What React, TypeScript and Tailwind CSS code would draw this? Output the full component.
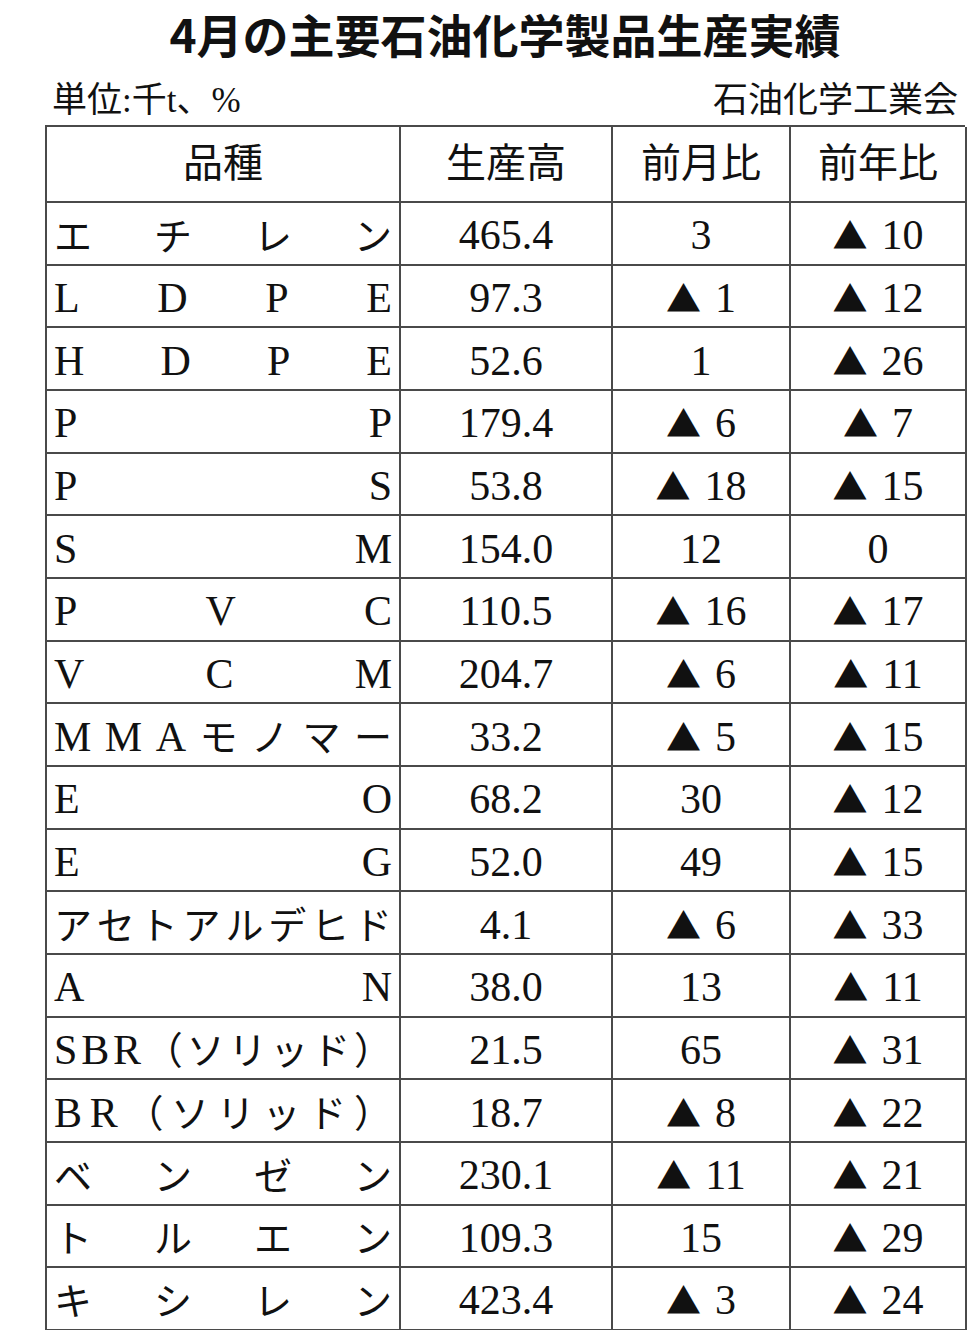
import React from "react";

type Row = { name: string[]; output: string; mom: string; yoy: string };

// 品種は一文字ずつ分けて均等割り付けする
const rows: Row[] = [
  { name: ["エ", "チ", "レ", "ン"], output: "465.4", mom: "3", yoy: "▲10" },
  { name: ["L", "D", "P", "E"], output: "97.3", mom: "▲1", yoy: "▲12" },
  { name: ["H", "D", "P", "E"], output: "52.6", mom: "1", yoy: "▲26" },
  { name: ["P", "P"], output: "179.4", mom: "▲6", yoy: "▲7" },
  { name: ["P", "S"], output: "53.8", mom: "▲18", yoy: "▲15" },
  { name: ["S", "M"], output: "154.0", mom: "12", yoy: "0" },
  { name: ["P", "V", "C"], output: "110.5", mom: "▲16", yoy: "▲17" },
  { name: ["V", "C", "M"], output: "204.7", mom: "▲6", yoy: "▲11" },
  { name: ["M", "M", "A", "モ", "ノ", "マ", "ー"], output: "33.2", mom: "▲5", yoy: "▲15" },
  { name: ["E", "O"], output: "68.2", mom: "30", yoy: "▲12" },
  { name: ["E", "G"], output: "52.0", mom: "49", yoy: "▲15" },
  { name: ["ア", "セ", "ト", "ア", "ル", "デ", "ヒ", "ド"], output: "4.1", mom: "▲6", yoy: "▲33" },
  { name: ["A", "N"], output: "38.0", mom: "13", yoy: "▲11" },
  { name: ["S", "B", "R", "（", "ソ", "リ", "ッ", "ド", "）"], output: "21.5", mom: "65", yoy: "▲31" },
  { name: ["B", "R", "（", "ソ", "リ", "ッ", "ド", "）"], output: "18.7", mom: "▲8", yoy: "▲22" },
  { name: ["ベ", "ン", "ゼ", "ン"], output: "230.1", mom: "▲11", yoy: "▲21" },
  { name: ["ト", "ル", "エ", "ン"], output: "109.3", mom: "15", yoy: "▲29" },
  { name: ["キ", "シ", "レ", "ン"], output: "423.4", mom: "▲3", yoy: "▲24" },
];

const isAscii = (c: string) => /^[A-Za-z0-9]$/.test(c);

function Ratio({ value }: { value: string }) {
  if (!value.startsWith("▲")) return <span>{value}</span>;
  return (
    <span className="flex items-baseline">
      <span className="font-['Noto_Sans_CJK_JP',sans-serif] text-[35px]">▲</span>
      <span className="ml-[14px]">{value.slice(1)}</span>
    </span>
  );
}

const cell = "h-[62.67px] pt-[4px] flex items-center border-r-2 border-b-2 border-[#4a4a4a]";

export default function App() {
  return (
    <main className="w-[970px] h-[1330px] bg-white text-[#111] overflow-hidden">
      <div className="ml-[45px] w-[920px]">
        {/* タイトル */}
        <h1 className="font-['Noto_Sans_CJK_JP',sans-serif] font-bold text-[46px] leading-[66px] text-center">
          4月の主要石油化学製品生産実績
        </h1>

        {/* 単位・出典 */}
        <div className="mt-[14px] h-[42px] px-[7px] flex items-center justify-between font-['Liberation_Serif','Noto_Sans_CJK_JP',serif] text-[35px] leading-[42px]">
          <span>単位:千t、%</span>
          <span>石油化学工業会</span>
        </div>

        {/* 表 */}
        <div className="mt-[3px] grid grid-cols-[354px_212px_178px_176px] border-l-2 border-t-2 border-[#4a4a4a] font-['Liberation_Serif','Noto_Sans_CJK_JP',serif] text-[42px] leading-none">
          {["品種", "生産高", "前月比", "前年比"].map((h) => (
            <div
              key={h}
              className="h-[76px] flex items-center justify-center border-r-2 border-b-2 border-[#4a4a4a] text-[40px]"
            >
              {h}
            </div>
          ))}
          {rows.map((r, i) => (
            <React.Fragment key={i}>
              <div className={`${cell} px-[7px] justify-between`}>
                {r.name.map((c, j) => (
                  <span key={j} className={isAscii(c) ? "" : "text-[38px] pt-[3px]"}>
                    {c}
                  </span>
                ))}
              </div>
              <div className={`${cell} justify-center`}>{r.output}</div>
              <div className={`${cell} justify-center`}>
                <Ratio value={r.mom} />
              </div>
              <div className={`${cell} justify-center`}>
                <Ratio value={r.yoy} />
              </div>
            </React.Fragment>
          ))}
        </div>
      </div>
    </main>
  );
}
